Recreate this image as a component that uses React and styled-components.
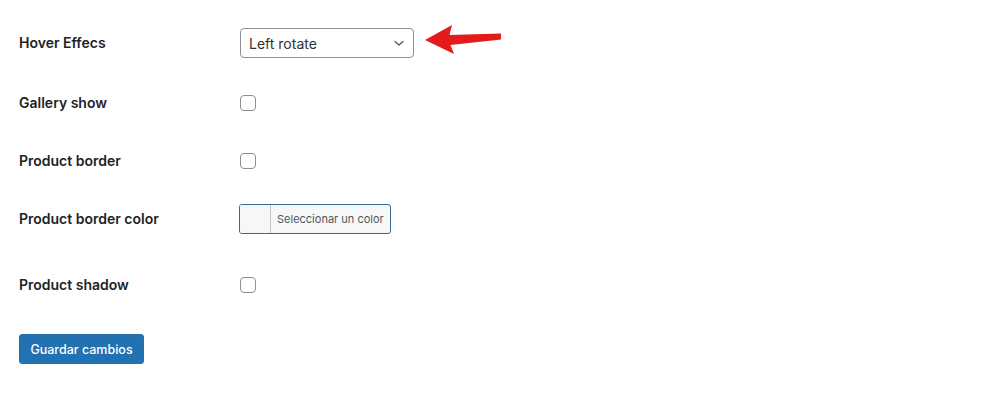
import React from "react";
import styled, { createGlobalStyle } from "styled-components";

const Global = createGlobalStyle`
  html, body { margin: 0; padding: 0; background: #ffffff; }
  body { font-family: Inter, "Noto Sans", "Liberation Sans", sans-serif; color: #1d2327; }
`;

const Page = styled.div`
  width: 1000px;
  height: 396px;
  box-sizing: border-box;
  padding: 13px 0 0 19px;
  display: flex;
  flex-direction: column;
`;

const Row = styled.div`
  display: grid;
  grid-template-columns: 221px auto;
  align-items: center;
  height: ${(p) => p.$h}px;
`;

const Label = styled.div`
  font-size: 14px;
  font-weight: 600;
  line-height: 1.3;
  color: #1d2327;
`;

const Cell = styled.div`
  display: flex;
  align-items: center;
`;

const Select = styled.div`
  box-sizing: border-box;
  width: 174px;
  height: 30px;
  border: 1px solid #8c8f94;
  border-radius: 4px;
  background: #fff;
  display: flex;
  align-items: center;
  justify-content: space-between;
  padding: 0 8px 0 8px;
  font-size: 14px;
  color: #2c3338;
`;

const Checkbox = styled.span`
  box-sizing: border-box;
  display: inline-block;
  width: 16px;
  height: 16px;
  border: 1px solid #8c8f94;
  border-radius: 4px;
  background: #fff;
`;

const ColorButton = styled.div`
  box-sizing: border-box;
  display: flex;
  align-items: stretch;
  height: 30px;
  width: 152px;
  margin-left: -1px;
  border: 1px solid #3a6a94;
  border-radius: 3px;
  background: #f6f7f7;
  overflow: hidden;
`;

const Swatch = styled.span`
  width: 30px;
  background: #f6f7f7;
  border-right: 1px solid #c3c4c7;
`;

const ColorText = styled.span`
  display: flex;
  align-items: center;
  padding-left: 6px;
  font-size: 11px;
  color: #50575e;
  white-space: nowrap;
`;

const Arrow = styled.svg`
  margin-left: 9px;
  display: block;
`;

const SaveButton = styled.button`
  align-self: flex-start;
  margin-top: 13px;
  height: 30px;
  width: 125px;
  padding: 0;
  border: 1px solid #2271b1;
  border-radius: 3px;
  background: #2271b1;
  color: #fff;
  font-family: inherit;
  font-size: 12.5px;
  font-weight: 500;
`;

const Chevron = () => (
  <svg width="12" height="12" viewBox="0 0 12 12" fill="none">
    <path d="M2 4.5 L6 8 L10 4.5" stroke="#50575e" strokeWidth="1.3" strokeLinecap="round" strokeLinejoin="round" />
  </svg>
);

export default function App() {
  return (
    <>
      <Global />
      <Page>
        <Row $h={60}>
          <Label>Hover Effecs</Label>
          <Cell>
            <Select>
              <span>Left rotate</span>
              <Chevron />
            </Select>
            <Arrow width="80" height="36" viewBox="423 25 80 36">
              <polygon
                points="425,40 452,25 449.5,35 501,33.5 501,39.5 450.5,45 454,54"
                fill="#e31b1b"
              />
            </Arrow>
          </Cell>
        </Row>
        <Row $h={60}>
          <Label>Gallery show</Label>
          <Cell><Checkbox /></Cell>
        </Row>
        <Row $h={56}>
          <Label>Product border</Label>
          <Cell><Checkbox /></Cell>
        </Row>
        <Row $h={60}>
          <Label>Product border color</Label>
          <Cell>
            <ColorButton>
              <Swatch />
              <ColorText>Seleccionar un color</ColorText>
            </ColorButton>
          </Cell>
        </Row>
        <Row $h={72}>
          <Label>Product shadow</Label>
          <Cell><Checkbox /></Cell>
        </Row>
        <SaveButton>Guardar cambios</SaveButton>
      </Page>
    </>
  );
}
